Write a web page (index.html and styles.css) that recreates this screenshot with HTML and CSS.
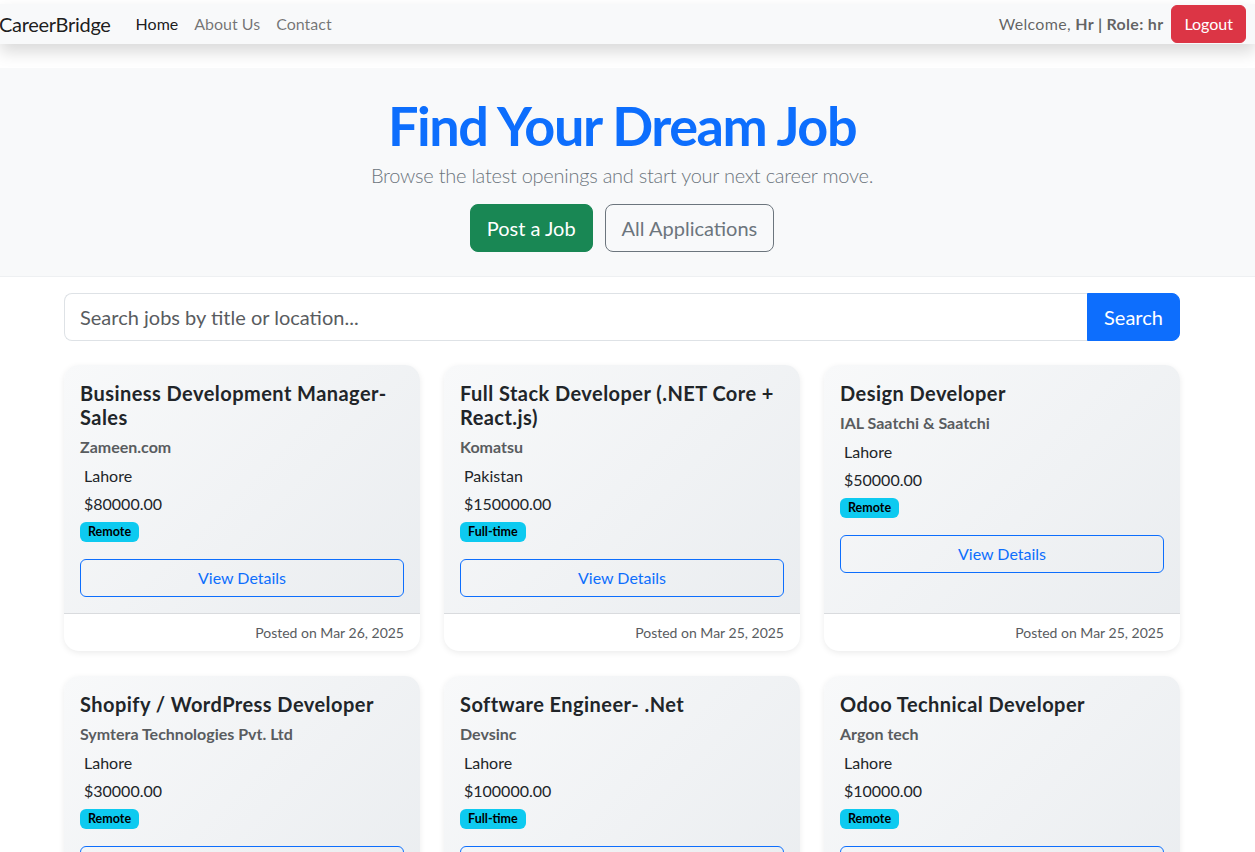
FILE: index.html
```html
<!DOCTYPE html>
<html lang="en">
<head>
<meta charset="utf-8">
<title>CareerBridge</title>
<link rel="stylesheet" href="styles.css">
</head>
<body>
<nav class="navbar">
  <div class="nav-left">
    <a class="brand" href="#">CareerBridge</a>
    <a class="nav-link active" href="#">Home</a>
    <a class="nav-link" href="#">About Us</a>
    <a class="nav-link" href="#">Contact</a>
  </div>
  <div class="nav-right">
    <span class="welcome">Welcome, <strong>Hr | Role: hr</strong></span>
    <button class="btn btn-danger">Logout</button>
  </div>
</nav>

<header class="hero">
  <div class="container hero-inner">
    <h1 class="hero-title">Find Your Dream Job</h1>
    <p class="lead">Browse the latest openings and start your next career move.</p>
    <div class="hero-actions">
      <a class="btn btn-lg btn-success" href="#">Post a Job</a>
      <a class="btn btn-lg btn-outline-secondary" href="#">All Applications</a>
    </div>
  </div>
</header>

<main class="container main">
  <form class="search">
    <input class="search-input" type="text" placeholder="Search jobs by title or location...">
    <button class="search-btn" type="button">Search</button>
  </form>

  <div class="grid">
    <div class="card">
      <div class="card-body">
        <h5 class="card-title">Business Development Manager- Sales</h5>
        <h6 class="company">Zameen.com</h6>
        <p class="info">Lahore</p>
        <p class="info salary">$80000.00</p>
        <span class="badge">Remote</span>
        <a class="btn btn-outline-primary" href="#">View Details</a>
      </div>
      <div class="card-footer">Posted on Mar 26, 2025</div>
    </div>
    <div class="card">
      <div class="card-body">
        <h5 class="card-title">Full Stack Developer (.NET Core + React.js)</h5>
        <h6 class="company">Komatsu</h6>
        <p class="info">Pakistan</p>
        <p class="info salary">$150000.00</p>
        <span class="badge">Full-time</span>
        <a class="btn btn-outline-primary" href="#">View Details</a>
      </div>
      <div class="card-footer">Posted on Mar 25, 2025</div>
    </div>
    <div class="card">
      <div class="card-body">
        <h5 class="card-title">Design Developer</h5>
        <h6 class="company">IAL Saatchi &amp; Saatchi</h6>
        <p class="info">Lahore</p>
        <p class="info salary">$50000.00</p>
        <span class="badge">Remote</span>
        <a class="btn btn-outline-primary" href="#">View Details</a>
      </div>
      <div class="card-footer">Posted on Mar 25, 2025</div>
    </div>
    <div class="card">
      <div class="card-body">
        <h5 class="card-title">Shopify / WordPress Developer</h5>
        <h6 class="company">Symtera Technologies Pvt. Ltd</h6>
        <p class="info">Lahore</p>
        <p class="info salary">$30000.00</p>
        <span class="badge">Remote</span>
        <a class="btn btn-outline-primary" href="#">View Details</a>
      </div>
      <div class="card-footer">Posted on Mar 24, 2025</div>
    </div>
    <div class="card">
      <div class="card-body">
        <h5 class="card-title">Software Engineer- .Net</h5>
        <h6 class="company">Devsinc</h6>
        <p class="info">Lahore</p>
        <p class="info salary">$100000.00</p>
        <span class="badge">Full-time</span>
        <a class="btn btn-outline-primary" href="#">View Details</a>
      </div>
      <div class="card-footer">Posted on Mar 24, 2025</div>
    </div>
    <div class="card">
      <div class="card-body">
        <h5 class="card-title">Odoo Technical Developer</h5>
        <h6 class="company">Argon tech</h6>
        <p class="info">Lahore</p>
        <p class="info salary">$10000.00</p>
        <span class="badge">Remote</span>
        <a class="btn btn-outline-primary" href="#">View Details</a>
      </div>
      <div class="card-footer">Posted on Mar 24, 2025</div>
    </div>
  </div>
</main>
</body>
</html>
```

FILE: styles.css
```css
* { box-sizing: border-box; }
html, body { margin: 0; padding: 0; }
body {
  font-family: Lato, "Noto Sans", sans-serif;
  font-size: 16px;
  line-height: 1.5;
  color: #212529;
  background: #fff;
}
a { text-decoration: none; }

.navbar {
  margin-top: 4px;
  height: 40px;
  background: #f8f9fa;
  box-shadow: 0 8px 16px rgba(0,0,0,.15);
  display: flex;
  align-items: center;
  justify-content: space-between;
  padding: 0 9px 0 0;
  margin-bottom: 24px;
  position: relative;
}
.nav-left { display: flex; align-items: center; }
.brand {
  font-size: 20px;
  letter-spacing: -0.3px;
  color: rgba(0,0,0,.9);
  margin-left: -1px;
  margin-right: 17px;
}
.nav-link {
  padding: 8px;
  color: rgba(0,0,0,.55);
}
.nav-link.active { color: rgba(0,0,0,.9); }
.nav-right { display: flex; align-items: center; gap: 8px; }
.welcome { color: rgba(0,0,0,.62); letter-spacing: 0.3px; }
.welcome strong { font-weight: 700; }

.btn {
  display: inline-block;
  font-family: inherit;
  font-size: 16px;
  line-height: 1.5;
  padding: 6px 12px;
  border: 1px solid transparent;
  border-radius: 6px;
  text-align: center;
  cursor: pointer;
}
.btn-danger { background: #dc3545; color: #fff; border-color: #dc3545; }
.btn-lg { font-size: 20px; padding: 8px 16px; border-radius: 8px; }
.btn-success { background: #198754; border-color: #198754; color: #fff; }
.btn-outline-secondary { color: #6c757d; border-color: #6c757d; }
.btn-outline-primary { color: #0d6efd; border-color: #0d6efd; display: block; width: 100%; }

.container {
  width: 1116px;
  margin-left: 64px;
}
.hero {
  background: #f8f9fa;
  padding: 24px 0;
  border-bottom: 1px solid #eef0f2;
}
.hero-inner { text-align: center; }
.hero-title {
  margin: 0 0 2px;
  font-size: 54px;
  font-weight: 700;
  letter-spacing: -1.45px;
  line-height: 67px;
  color: #0d6efd;
}
.lead {
  margin: -1px 0 14px;
  font-size: 20px;
  font-weight: 300;
  letter-spacing: -0.25px;
  color: #6c757d;
}
.hero-actions { display: flex; justify-content: center; gap: 12px; }

.main { padding-top: 16px; }
.search { display: flex; margin-bottom: 24px; }
.search-input {
  flex: 1;
  height: 48px;
  font-family: inherit;
  font-size: 20px;
  padding: 8px 15px;
  border: 1px solid #dee2e6;
  border-right: none;
  border-radius: 8px 0 0 8px;
  color: #212529;
  outline: none;
}
.search-input::placeholder { color: #595c5f; }
.search-btn {
  width: 93px;
  font-family: inherit;
  font-size: 20px;
  color: #fff;
  background: #0d6efd;
  border: 1px solid #0d6efd;
  border-radius: 0 8px 8px 0;
}

.grid {
  display: grid;
  grid-template-columns: repeat(3, 356px);
  column-gap: 24px;
  row-gap: 25px;
}
.card {
  display: flex;
  flex-direction: column;
  border-radius: 15px;
  overflow: hidden;
  background: linear-gradient(135deg, #f8f9fa, #e9ecef);
  box-shadow: 0 2px 6px rgba(0,0,0,.08);
}
.card-body { flex: 1; padding: 16px; }
.card-title {
  margin: 0 0 8px;
  font-size: 20px;
  font-weight: 700;
  letter-spacing: 0.45px;
  line-height: 24px;
  color: #212529;
}
.company {
  margin: 0 0 8px;
  font-size: 16px;
  font-weight: 700;
  line-height: 19px;
  color: #595c5f;
}
.info { margin: 0 0 4px; padding-left: 4px; line-height: 24px; }
.info.salary { margin-bottom: 6px; }
.badge {
  display: block;
  width: max-content;
  font-size: 12.5px;
  font-weight: 700;
  line-height: 12px;
  padding: 4px 8px;
  border-radius: 6px;
  background: #0dcaf0;
  color: #000;
  margin-bottom: 17px;
}
.card-footer {
  background: #fff;
  border-top: 1px solid #d9dbde;
  padding: 8px 16px;
  line-height: 21px;
  text-align: right;
  font-size: 14px;
  color: #595c5f;
}
```
